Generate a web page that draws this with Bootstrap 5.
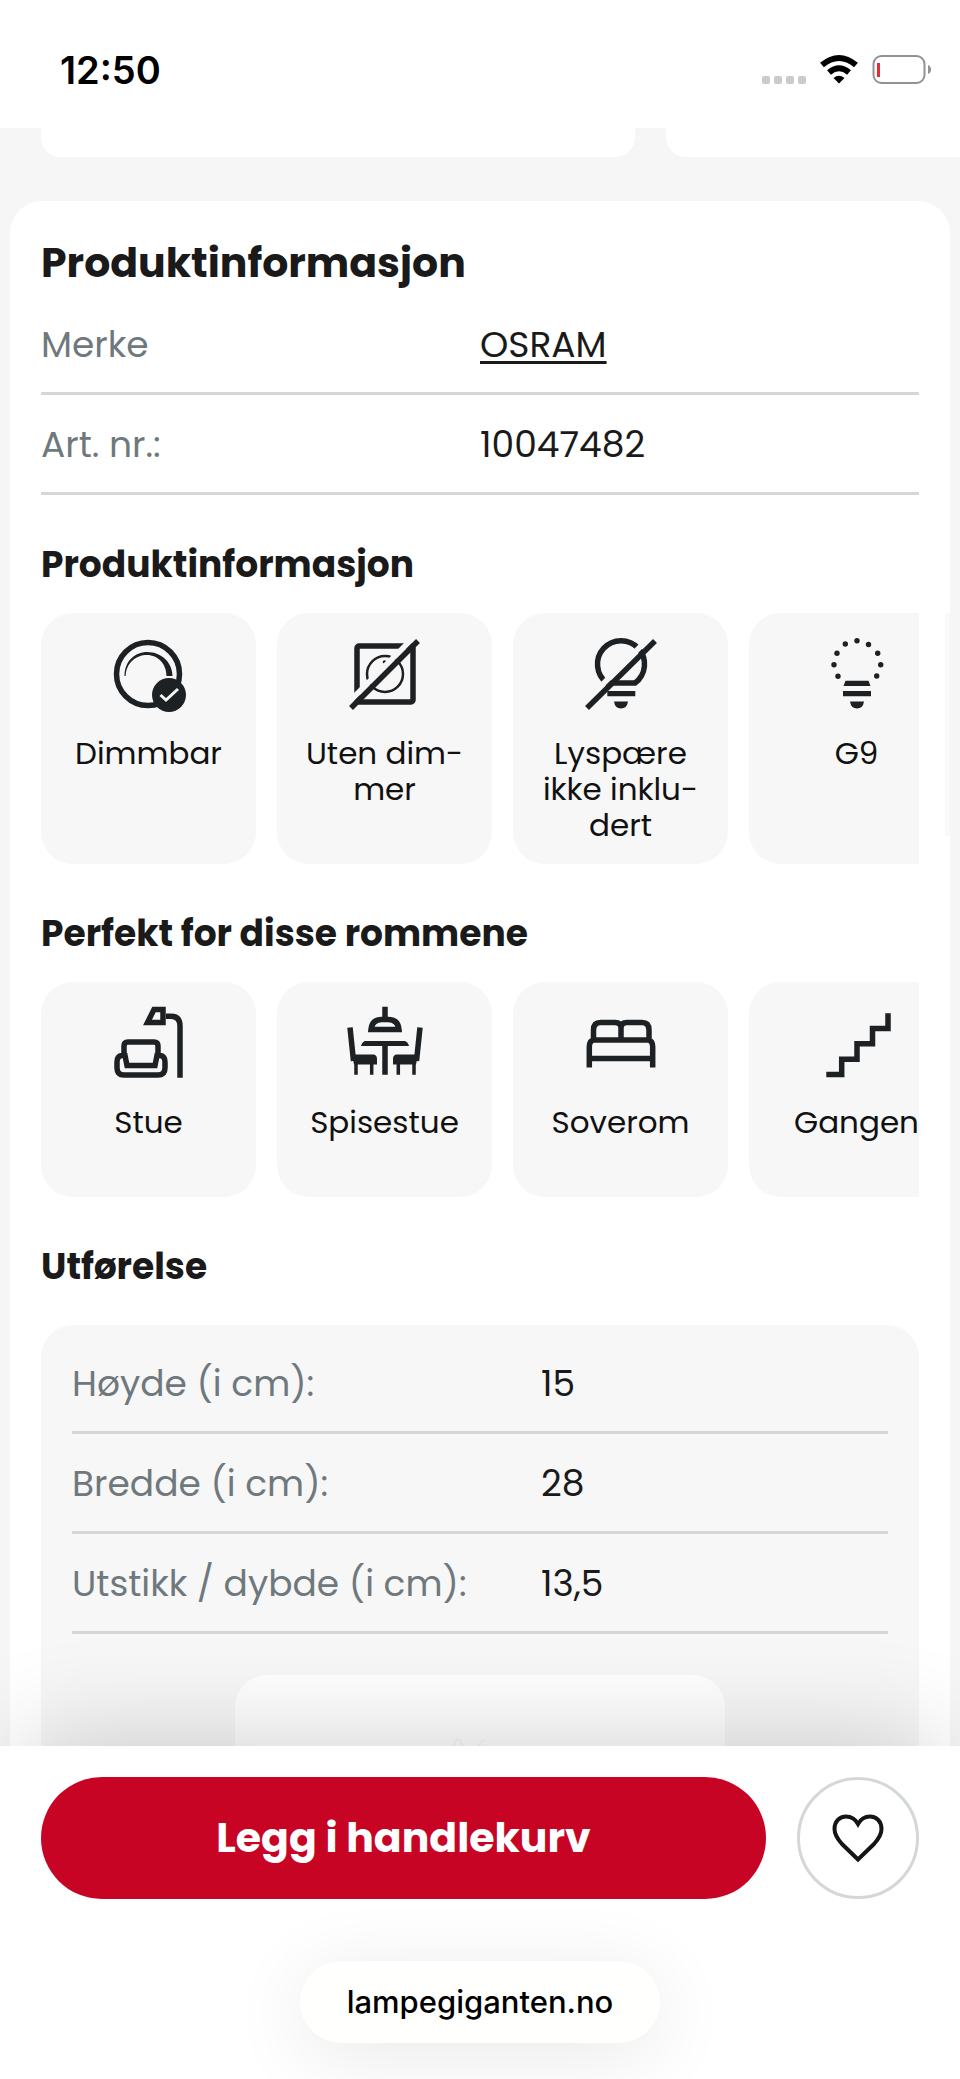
<!DOCTYPE html>
<html lang="no">
<head>
<meta charset="utf-8">
<meta name="viewport" content="width=device-width, initial-scale=1">
<title>Produktinformasjon – lampegiganten.no</title>
<link href="https://cdn.jsdelivr.net/npm/bootstrap@5.3.0/dist/css/bootstrap.min.css" rel="stylesheet">
<script src="https://cdn.jsdelivr.net/npm/bootstrap@5.3.0/dist/js/bootstrap.bundle.min.js"></script>
<style>
  :root { --ink: #1a1a1a; --soft: #f6f6f6; --tile: #f7f7f7; --muted: #6f797d; --rule: #d3d7d8; --brand: #c80425; }
  body { font-family: Poppins, Inter, "Liberation Sans", sans-serif; color: var(--ink); background: var(--soft); font-size: 36px; line-height: 50px; }
  .app-shell { height: 100vh; }
  .status-bar { height: 128px; padding: 0 29px 0 60px; background: #fff; flex: none; }
  .clock { font-family: Inter, sans-serif; font-size: 38px; font-weight: 600; color: #000; padding-top: 12px; }
  .status-icons { margin-top: 20px; }
  .peek-row { gap: 31px; padding-left: 41px; height: 29px; flex: none; }
  .peek-card { background: #fff; border-radius: 0 0 20px 20px; flex: 0 0 594px; }
  .info-card { background: #fff; border-radius: 32px 32px 0 0; margin: 44px 10px 0; padding: 37px 31px 0; }
  .info-card h1 { font-size: 41px; line-height: 50px; font-weight: 700; margin: 0 0 7px; }
  .info-card h2 { font-size: 36px; line-height: 50px; font-weight: 700; margin: 45px 0 23px; }
  .spec { width: 100%; table-layout: fixed; }
  .spec th, .spec td { padding: 25px 0 22px; border-bottom: 3px solid var(--rule); font-weight: 400; }
  .spec th { color: var(--muted); width: 50%; }
  .spec-wide th { width: 469px; }
  .spec a { color: inherit; text-underline-offset: 4px; text-decoration-thickness: 3px; }
  .tile-row { gap: 21px; }
  .tile { flex: 0 0 215px; min-height: 215px; padding: 22px 22px 21px; gap: 20px; border-radius: 32px; background: var(--tile); font-size: 31px; line-height: 36px; color: #111; }
  .tile svg { width: 80px; height: 80px; flex: none; fill: none; stroke: #1e2123; stroke-width: 5.5; }
  .tile svg .solid { fill: #1e2123; stroke: none; }
  .scroll-hint { right: 0; top: 412px; width: 5px; height: 223px; background: #f9f9f9; }
  .info-card h2.flush { margin-bottom: 33px; }
  .panel { background: var(--tile); border-radius: 32px 32px 0 0; padding: 9px 31px 0; }
  .drawing { background: #fff; border-radius: 32px 32px 0 0; margin: 41px auto 0; width: 60%; height: 200px; padding-top: 62px; }
  .buy-bar { background: #fff; padding: 31px 41px 36px; z-index: 2; flex: none; box-shadow: 0 -20px 110px -20px rgba(0,0,0,.2); }
  .buy-row { gap: 31px; }
  .btn-buy { height: 122px; background: var(--brand); color: #fff; font-size: 41px; font-weight: 700; }
  .btn-buy:hover { background: #a8031f; color: #fff; }
  .btn-heart { width: 122px; height: 122px; border: 3px solid var(--rule); flex: none; }
  .address { margin-top: 62px; height: 82px; width: 360px; background: #fffffd; color: #000; font-family: Inter, sans-serif; font-size: 31px; font-weight: 500; box-shadow: 0 12px 80px rgba(0,0,0,.09); }
</style>
</head>
<body>
<div class="app-shell d-flex flex-column overflow-hidden">
  <header class="status-bar d-flex justify-content-between align-items-center">
    <span class="clock">12:50</span>
    <svg class="status-icons" width="170" height="44" viewBox="0 0 170 44" aria-label="Status" role="img">
      <g fill="#cbcbcb"><rect x="1" y="24" width="8" height="8" rx="2"/><rect x="13" y="24" width="8" height="8" rx="2"/><rect x="25" y="24" width="8" height="8" rx="2"/><rect x="37" y="24" width="8" height="8" rx="2"/></g>
      <g fill="none" stroke="#000" stroke-width="6"><path d="M61 13Q78 -1 95 13"/><path d="M68 20.500Q78 12 88 20.500"/></g>
      <path d="M72.500 26Q78 21.500 83.500 26L78 31.500Z" fill="#000"/>
      <rect x="112.500" y="4" width="51" height="27" rx="8" fill="none" stroke="#929292" stroke-width="2"/>
      <rect x="116" y="11" width="3" height="14" fill="#ea2b33"/>
      <path d="M167 13Q170 14 170 17.500Q170 21 167 22Z" fill="#929292"/>
    </svg>
  </header>

  <main class="flex-grow-1 overflow-hidden">
    <div class="peek-row d-flex overflow-hidden"><div class="peek-card"></div><div class="peek-card"></div></div>

    <section class="info-card position-relative">
      <h1>Produktinformasjon</h1>
      <table class="spec">
        <tr><th scope="row">Merke</th><td><a href="#osram">OSRAM</a></td></tr>
        <tr><th scope="row">Art. nr.:</th><td>10047482</td></tr>
      </table>

      <h2>Produktinformasjon</h2>
      <div class="tile-row d-flex overflow-hidden">
        <div class="tile d-flex flex-column align-items-center text-center">
          <svg viewBox="0 0 80 80"><circle cx="39" cy="39" r="31.500"/><path class="solid" d="M15.500 41C15.500 26 26 17 38 17C53 17 63.500 28 63.500 41H57.500C57.500 29 49 20 38 20C27 20 17 28 16.700 41Z"/><circle class="solid" cx="60" cy="60" r="17"/><path d="M51.500 60L57 65L69 54" stroke="#f6f6f6" stroke-width="3"/></svg>
          <span>Dimmbar</span>
        </div>
        <div class="tile d-flex flex-column align-items-center text-center">
          <svg viewBox="0 0 80 80"><rect x="12" y="11" width="56" height="56" rx="2"/><circle cx="40" cy="39" r="18" stroke-width="2.500"/><circle class="solid" cx="39.500" cy="27" r="1.800"/><path d="M1 70L69 2" stroke="#f6f6f6"/><path d="M6 73L73 6"/></svg>
          <span>Uten dim&shy;mer</span>
        </div>
        <div class="tile d-flex flex-column align-items-center text-center">
          <svg viewBox="0 0 80 80"><path d="M54 48A23.500 23.500 0 1 0 26 48Z"/><path class="solid" d="M26.300 56H54.300V61.300H26.300ZM33 66.500H47Q46 73.500 40 73.500T33 66.500Z"/><path d="M1 70L69 2" stroke="#f6f6f6"/><path d="M6 73L74 6"/></svg>
          <span>Lyspære ikke inklu&shy;dert</span>
        </div>
        <div class="tile d-flex flex-column align-items-center text-center">
          <svg viewBox="0 0 80 80"><g class="solid"><circle cx="40" cy="5.700" r="2.700"/><circle cx="28.300" cy="9" r="2.700"/><circle cx="51.500" cy="9.500" r="2.700"/><circle cx="20" cy="18.300" r="2.700"/><circle cx="60.700" cy="18.300" r="2.700"/><circle cx="17" cy="29.700" r="2.700"/><circle cx="63.700" cy="29.700" r="2.700"/><circle cx="21" cy="41.300" r="2.700"/><circle cx="59.700" cy="41" r="2.700"/><path d="M28.500 45.700H51.500L53.500 51H26.500ZM26 56H54V61.300H26ZM33 66.500H47Q46 73.500 40 73.500T33 66.500Z"/></g></svg>
          <span>G9</span>
        </div>
      </div>
      <div class="scroll-hint position-absolute"></div>

      <h2>Perfekt for disse rommene</h2>
      <div class="tile-row d-flex overflow-hidden">
        <div class="tile d-flex flex-column align-items-center text-center">
          <svg viewBox="0 0 80 80"><path d="M45 5.500H54V18.500H38.500ZM57 12.300H62Q71 12.300 71 22V73.700M15 52V42Q15 38 19 38H45Q49 38 49 42V52M13 51.500Q8 52 8 58V64Q8 71 15 71H49Q56 71 56 64V58Q56 52 51 51.500H48L46 61.500H18L16 51.500Z"/></svg>
          <span>Stue</span>
        </div>
        <div class="tile d-flex flex-column align-items-center text-center">
          <svg viewBox="0 0 80 80"><path d="M40 2.700V14M26 25.500Q27 15.500 37 15.500H43Q53 15.500 54 25.500ZM40 41V70.700M5 23.500L8.500 57M75 23.500L71.500 57"/><path class="solid" d="M20 37H60Q63 38 64 42H16Q17 38 20 37ZM7 50.500H28Q32 50.500 32 55V60.500H9ZM73 50.500H52Q48 50.500 48 55V60.500H71Z"/><path stroke-width="3.500" d="M11 60V70.700M26.700 60V70.700M53.300 60V70.700M69 60V70.700"/></svg>
          <span>Spisestue</span>
        </div>
        <div class="tile d-flex flex-column align-items-center text-center">
          <svg viewBox="0 0 80 80"><path d="M12.500 36V26Q12.500 18.500 19.500 18.500H34Q40 18.500 40 24Q40 18.500 46 18.500H61Q68 18.500 68 26V36M40 23V36M8.300 63.500V43Q8.300 36.500 13 36H67Q71.700 36.500 71.700 43V63.500M8 54.500H72"/></svg>
          <span>Soverom</span>
        </div>
        <div class="tile d-flex flex-column align-items-center text-center">
          <svg viewBox="0 0 80 80"><path d="M9.300 70.500H24.700V55.300H40V39.700H55.500V24.500H71V9.300"/></svg>
          <span>Gangen</span>
        </div>
      </div>

      <h2 class="flush">Utførelse</h2>
      <div class="panel">
        <table class="spec spec-wide">
          <tr><th scope="row">Høyde (i cm):</th><td>15</td></tr>
          <tr><th scope="row">Bredde (i cm):</th><td>28</td></tr>
          <tr><th scope="row">Utstikk / dybde (i cm):</th><td>13,5</td></tr>
        </table>
        <div class="drawing text-center"><svg class="d-block mx-auto" width="60" height="16" viewBox="0 0 60 16" fill="none" stroke="#f8f8f8" stroke-width="2"><path d="M4 10Q4 3 8 3Q12 3 12 10M28 10L32 4L36 3"/></svg></div>
      </div>
    </section>
  </main>

  <footer class="buy-bar position-relative d-flex flex-column align-items-center">
    <div class="buy-row d-flex w-100">
      <button type="button" class="btn btn-buy rounded-pill flex-grow-1 border-0">Legg i handlekurv</button>
      <button type="button" class="btn btn-heart rounded-circle p-0 d-flex align-items-center justify-content-center" aria-label="Legg til i ønskeliste">
        <svg width="56" height="52" viewBox="0 0 56 52" fill="none" stroke="#151515" stroke-width="4"><path d="M28 47.500L12 32C7.500 27 4.500 22 4.500 17C4.500 9.500 9.500 4.500 16 4.500C21.500 4.500 25.500 7.500 28 12C30.500 7.500 34.500 4.500 40 4.500C46.500 4.500 51.500 9.500 51.500 17C51.500 22 48.500 27 44 32Z"/></svg>
      </button>
    </div>
    <button type="button" class="address btn rounded-pill border-0 p-0">lampegiganten.no</button>
  </footer>
</div>
</body>
</html>
